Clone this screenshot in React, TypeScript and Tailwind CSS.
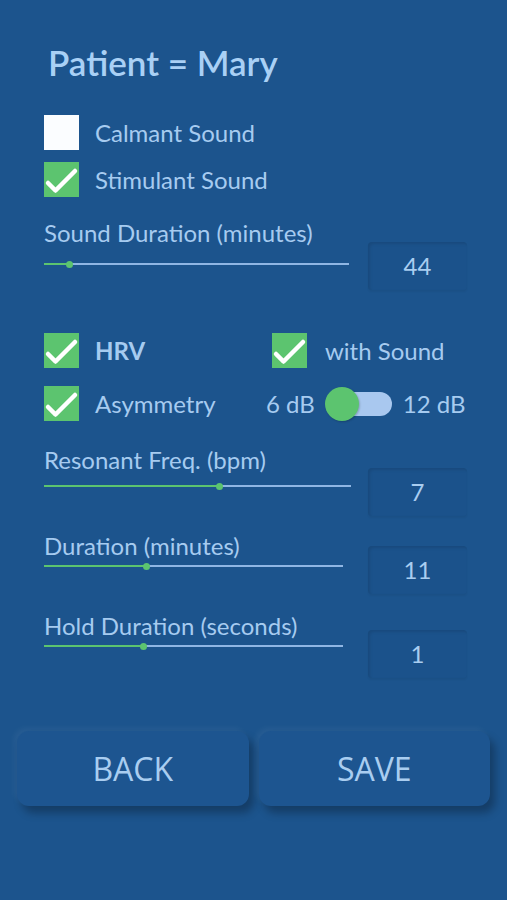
import React from 'react';

function Check({ on }: { on: boolean }) {
  if (!on) return <div className="w-[35px] h-[35px] bg-[#fbfdff] shrink-0" />;
  return (
    <div className="w-[35px] h-[35px] bg-[#5cc46f] shrink-0">
      <svg width="35" height="35" viewBox="0 0 35 35">
        <polyline points="4,21 11.5,28.5 31,9" fill="none" stroke="#ffffff" strokeWidth="4.5" strokeLinecap="round" strokeLinejoin="round" />
      </svg>
    </div>
  );
}

function Slider({ width, pct, className }: { width: number; pct: number; className: string }) {
  return (
    <div className={'relative h-[8px] ' + className} style={{ width }}>
      <div className="absolute left-0 right-0 top-[3px] h-[2px] bg-[#8fb6e4]" />
      <div className="absolute left-0 top-[3px] h-[2px] bg-[#5cc46f]" style={{ width: `${pct}%` }} />
      <div className="absolute top-[0.5px] w-[7px] h-[7px] -ml-[3.5px] rounded-full bg-[#5cc46f]" style={{ left: `${pct}%` }} />
    </div>
  );
}

function ValueBox({ value, className }: { value: string; className: string }) {
  return (
    <div className={'w-[99px] h-[48px] rounded-[4px] flex items-center justify-center text-[24px] text-[#a9cdf0] bg-[#1b528b] shadow-[inset_2px_2px_3px_rgba(0,0,0,0.1),0_2px_2px_rgba(0,0,0,0.05)] ' + className}>
      {value}
    </div>
  );
}

export default function App() {
  return (
    <div className="w-[507px] h-[900px] bg-[#1c548d] font-['Lato',sans-serif] text-[#a6cbf0] pt-[42px]">
      <h1 className="ml-[48px] text-[35px] leading-[40px] font-semibold text-[#a9d0f5]">Patient = Mary</h1>

      <div className="mt-[33px] ml-[44px] flex flex-col gap-[12px]">
        <div className="flex items-center h-[35px]">
          <Check on={false} />
          <span className="ml-[16px] text-[24px]">Calmant Sound</span>
        </div>
        <div className="flex items-center h-[35px]">
          <Check on={true} />
          <span className="ml-[16px] text-[24px]">Stimulant Sound</span>
        </div>
      </div>

      <div className="mt-[22px] ml-[44px] flex items-start">
        <div className="w-[324px]">
          <div className="text-[24px] leading-[28px]">Sound Duration (minutes)</div>
          <Slider width={305} pct={8.2} className="mt-[13px]" />
        </div>
        <ValueBox value="44" className="mt-[23px]" />
      </div>

      <div className="mt-[43px] ml-[44px] flex flex-col gap-[18px]">
        <div className="flex items-center h-[35px]">
          <div className="w-[228px] flex items-center">
            <Check on={true} />
            <span className="ml-[16px] text-[24px] font-bold">HRV</span>
          </div>
          <Check on={true} />
          <span className="ml-[18px] text-[24px]">with Sound</span>
        </div>
        <div className="flex items-center h-[35px]">
          <div className="w-[222px] flex items-center">
            <Check on={true} />
            <span className="ml-[16px] text-[24px]">Asymmetry</span>
          </div>
          <span className="text-[24px]">6 dB</span>
          <div className="relative ml-[10px] w-[67px] h-[34px]">
            <div className="absolute left-[10px] right-0 top-[5px] h-[24px] rounded-full bg-[#a9c8ef]" />
            <div className="absolute left-0 top-0 w-[34px] h-[34px] rounded-full bg-[#5cc46f] shadow-[1px_1px_2px_rgba(0,0,0,0.2)]" />
          </div>
          <span className="ml-[11px] text-[24px]">12 dB</span>
        </div>
      </div>

      <div className="mt-[25px] ml-[44px] flex items-start">
        <div className="w-[324px]">
          <div className="text-[24px] leading-[28px]">Resonant Freq. (bpm)</div>
          <Slider width={307} pct={57.2} className="mt-[8px]" />
        </div>
        <ValueBox value="7" className="mt-[22px]" />
      </div>

      <div className="mt-[16px] ml-[44px] flex items-start">
        <div className="w-[324px]">
          <div className="text-[24px] leading-[28px]">Duration (minutes)</div>
          <Slider width={299} pct={34.4} className="mt-[2px]" />
        </div>
        <ValueBox value="11" className="mt-[14px]" />
      </div>

      <div className="mt-[18px] ml-[44px] flex items-start">
        <div className="w-[324px]">
          <div className="text-[24px] leading-[28px]">Hold Duration (seconds)</div>
          <Slider width={299} pct={33.4} className="mt-[2px]" />
        </div>
        <ValueBox value="1" className="mt-[18px]" />
      </div>

      <div className="mt-[53px] px-[17px] flex gap-[10px]">
        <button className="flex-1 h-[75px] rounded-[12px] bg-[#1d5590] font-['Open_Sans',sans-serif] text-[32px] text-[#a9cdf0] shadow-[5px_7px_8px_rgba(0,0,0,0.28),-3px_-3px_6px_rgba(255,255,255,0.05)]">
          BACK
        </button>
        <button className="flex-1 h-[75px] rounded-[12px] bg-[#1d5590] font-['Open_Sans',sans-serif] text-[32px] text-[#a9cdf0] shadow-[5px_7px_8px_rgba(0,0,0,0.28),-3px_-3px_6px_rgba(255,255,255,0.05)]">
          SAVE
        </button>
      </div>
    </div>
  );
}
